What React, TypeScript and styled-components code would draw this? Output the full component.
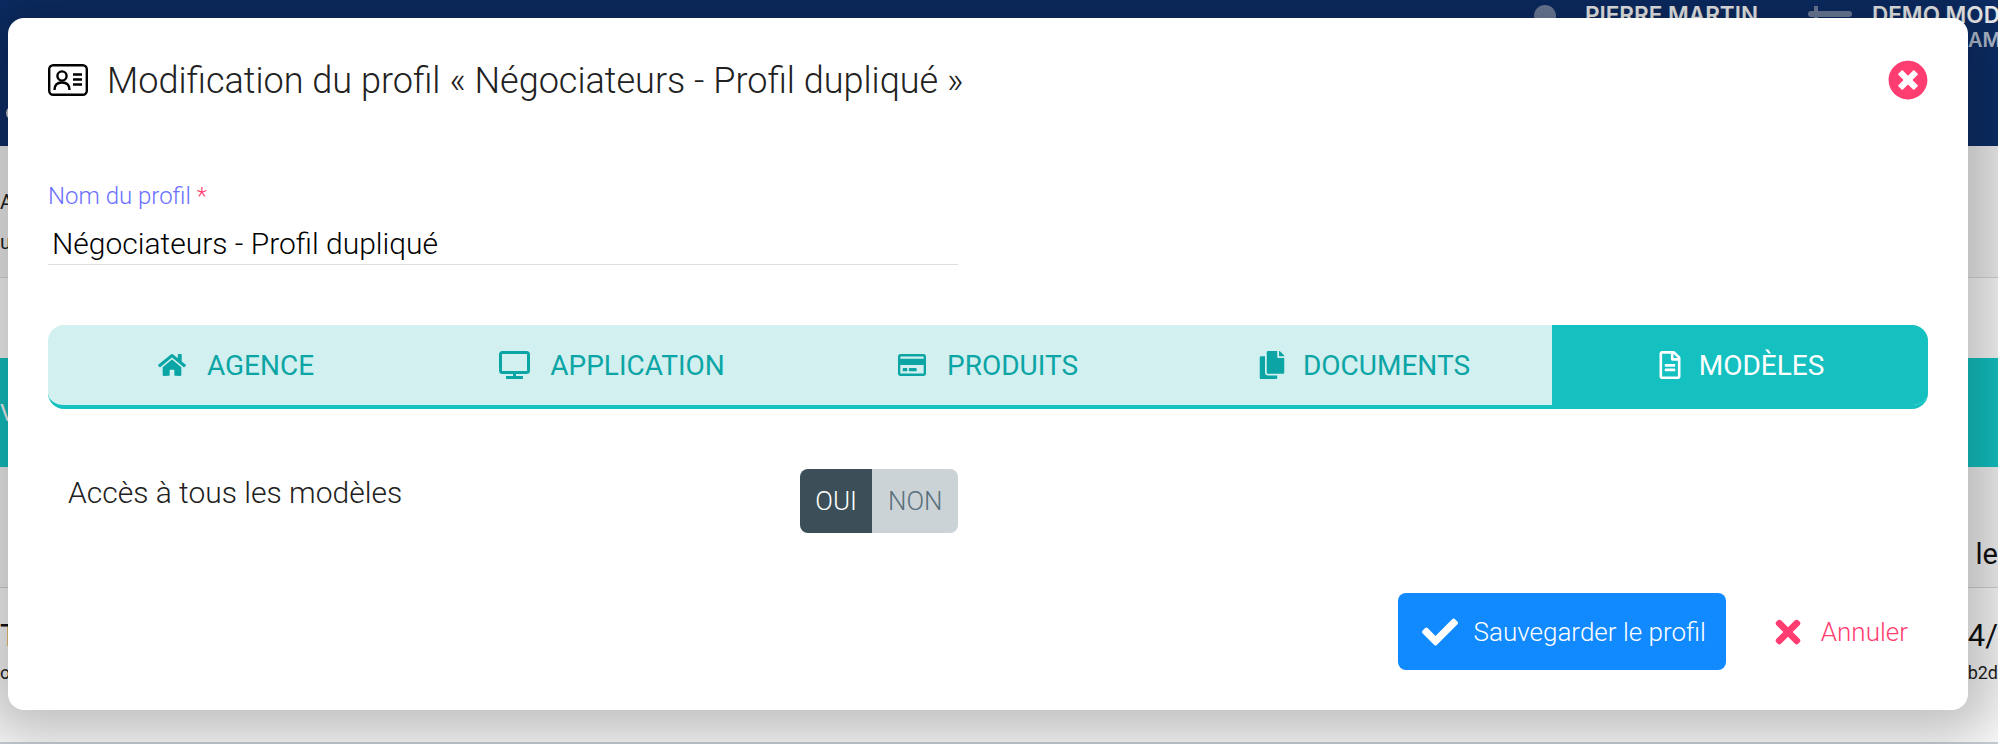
import React from 'react'
import styled, { createGlobalStyle } from 'styled-components'
import { FaHome, FaRegCreditCard, FaCopy, FaRegFileAlt, FaTimesCircle, FaCheck, FaTimes } from 'react-icons/fa'

const GlobalStyle = createGlobalStyle`
  html, body { margin: 0; padding: 0; height: 744px; overflow: hidden; background: #fff; }
  body { font-family: Roboto, "Liberation Sans", sans-serif; }
`

const Page = styled.div`
  position: relative;
  width: 1998px;
  height: 744px;
  overflow: hidden;
  background: #fff;
  display: flex;
  flex-direction: column;
`

const TopBar = styled.header`
  flex: none;
  height: 146px;
  background: #0d2f6b;
  display: flex;
  align-items: flex-start;
  color: #fff;
  font-family: Inter, sans-serif;
  overflow: hidden;
`

const LogoMark = styled.div`
  width: 14px;
  height: 14px;
  margin: 106px auto 0 6px;
  border-radius: 50%;
  background: #d5d5d5;
`

const Avatar = styled.div`
  flex: none;
  width: 22px;
  height: 22px;
  margin-top: 5px;
  border-radius: 50%;
  background: #7686a6;
`

const UserName = styled.div`
  flex: none;
  width: 223px;
  margin-left: 29px;
  padding-top: 1px;
  font-size: 22.5px;
  font-weight: 600;
  white-space: nowrap;
`

const Swap = styled.div`
  position: relative;
  flex: none;
  width: 44px;
  height: 6px;
  margin-top: 11px;
  border-radius: 3px;
  background: #7686a6;
  &::before {
    content: '';
    position: absolute;
    left: 6px;
    top: -5px;
    width: 4px;
    height: 16px;
    background: #7686a6;
  }
`

const Account = styled.div`
  flex: none;
  width: 126px;
  margin-left: 20px;
  padding-top: 1px;
  font-size: 22.5px;
  line-height: 27px;
  font-weight: 600;
  white-space: nowrap;
  overflow: hidden;
`

const AccountRole = styled.div`
  padding-top: 2px;
  padding-left: 96px;
  font-size: 20px;
  line-height: 20px;
  color: #b9c4d6;
`

const Intro = styled.div`
  flex: none;
  height: 132px;
  box-sizing: border-box;
  padding-top: 36px;
  border-bottom: 1px solid #dcdcdc;
  background: #f6f6f6;
  font-size: 20px;
  line-height: 40px;
  color: #222;
`

const Strip = styled.div`
  flex: none;
  height: 80px;
  background: #fff;
`

const Band = styled.div`
  flex: none;
  height: 109px;
  display: flex;
  align-items: center;
  background: #14c8c8;
  color: #fff;
  font-size: 24px;
`

const Heading = styled.div`
  flex: none;
  height: 121px;
  box-sizing: border-box;
  padding-top: 70px;
  border-bottom: 1px solid #d8d8d8;
  display: flex;
  justify-content: flex-end;
  font-size: 29px;
  font-weight: 400;
  line-height: 34px;
  color: #111;
  background: #f8f8f8;
`

const DataRow = styled.div`
  flex: 1;
  padding-top: 32px;
  display: flex;
  justify-content: space-between;
  border-bottom: 2px solid #ccd3d9;
`

const DataCell = styled.div<{ $right?: boolean }>`
  font-size: 31px;
  line-height: 32px;
  color: #111;
  text-align: ${p => (p.$right ? 'right' : 'left')};
  small {
    display: block;
    margin-top: 10px;
    font-size: 18px;
    line-height: 22px;
    color: #222;
  }
`

const Modal = styled.section`
  position: absolute;
  left: 8px;
  top: 18px;
  width: 1960px;
  height: 692px;
  box-sizing: border-box;
  padding: 40px;
  border-radius: 16px;
  background: #fff;
  box-shadow: 0 0 60px 30px rgba(0, 0, 0, 0.25);
  display: flex;
  flex-direction: column;
`

const ModalHeader = styled.div`
  display: flex;
  align-items: center;
  height: 44px;
`

const ModalTitle = styled.h1`
  margin: 2px 0 0;
  font-size: 36.05px;
  font-weight: 300;
  line-height: 46px;
  color: #212121;
`

const ProfileIcon = styled.svg`
  flex: none;
  width: 40px;
  height: 32px;
  margin-right: 19px;
`

const CloseIcon = styled(FaTimesCircle)`
  margin-left: auto;
  font-size: 40px;
  color: #ff3d71;
`

const FieldLabel = styled.label`
  margin-top: 80px;
  font-size: 24px;
  line-height: 28px;
  font-weight: 300;
  color: #6a70ff;
  span { color: #ff3d71; }
`

const NameInput = styled.div`
  width: 910px;
  box-sizing: border-box;
  margin-top: 10px;
  border-bottom: 1px solid #dedede;
  padding: 6px 4px 2px;
  font-size: 30px;
  line-height: 36px;
  font-weight: 300;
  color: #000;
`

const Tabs = styled.div`
  display: flex;
  margin-top: 60px;
  height: 80px;
  border-radius: 16px;
  border-bottom: 4px solid #14c0c0;
  background: #d2f0f0;
  overflow: hidden;
`

const Tab = styled.div<{ $active?: boolean; $gap: number }>`
  flex: 1;
  display: flex;
  align-items: center;
  justify-content: center;
  gap: ${p => p.$gap}px;
  font-size: 28px;
  font-weight: 400;
  text-transform: uppercase;
  color: ${p => (p.$active ? '#fff' : '#0ca5a5')};
  background: ${p => (p.$active ? '#14c0c0' : 'transparent')};
  svg { flex: none; font-size: 28px; }
`

const MonitorIcon = styled.svg`
  width: 31px;
  height: 28px;
`

const Row = styled.div`
  display: flex;
  justify-content: space-between;
  width: 910px;
  margin-top: 60px;
  padding-left: 20px;
  box-sizing: border-box;
`

const RowLabel = styled.div`
  padding-top: 6px;
  font-size: 30px;
  line-height: 36px;
  font-weight: 300;
  color: #212121;
`

const Toggle = styled.div`
  display: flex;
  height: 64px;
  border-radius: 8px;
  overflow: hidden;
`

const ToggleOption = styled.div<{ $on?: boolean }>`
  padding: 0 15.5px;
  display: flex;
  align-items: center;
  font-size: 26px;
  font-weight: 300;
  color: ${p => (p.$on ? '#fff' : '#5a6f7c')};
  background: ${p => (p.$on ? '#3c4f58' : '#cbd3d7')};
`

const Actions = styled.div`
  display: flex;
  justify-content: flex-end;
  align-items: center;
  gap: 44px;
  margin-top: auto;
  padding-right: 20px;
`

const SaveButton = styled.button`
  display: flex;
  align-items: center;
  gap: 16px;
  height: 77px;
  padding: 0 20px 0 24px;
  border: 0;
  border-radius: 8px;
  background: #1189ff;
  color: #fff;
  font: 300 26px Roboto, sans-serif;
  svg { font-size: 36px; }
`

const CancelButton = styled.div`
  display: flex;
  align-items: center;
  gap: 15px;
  font-size: 26px;
  font-weight: 300;
  color: #ff3d71;
  svg { font-size: 36px; }
`

const Monitor = () => (
  <MonitorIcon viewBox="0 0 31 28" fill="none" stroke="currentColor">
    <rect x="1.5" y="1.5" width="28" height="20" rx="2" strokeWidth="3" />
    <path d="M15.5 22v4M7 26.5h17" strokeWidth="3" />
  </MonitorIcon>
)

const tabs = [
  { label: 'Agence', icon: <FaHome />, gap: 21 },
  { label: 'Application', icon: <Monitor />, gap: 20 },
  { label: 'Produits', icon: <FaRegCreditCard />, gap: 21 },
  { label: 'Documents', icon: <FaCopy />, gap: 17 },
  { label: 'Modèles', icon: <FaRegFileAlt />, gap: 15, active: true },
]

const App = () => {
  return (
    <Page>
      <GlobalStyle />
      <TopBar>
        <LogoMark />
        <Avatar />
        <UserName>PIERRE MARTIN</UserName>
        <Swap />
        <Account>
          DEMO MODE
          <AccountRole>AMI</AccountRole>
        </Account>
      </TopBar>
      <Intro>
        A<br />u
      </Intro>
      <Strip />
      <Band>V</Band>
      <Heading>de le</Heading>
      <DataRow>
        <DataCell>T<small>o</small></DataCell>
        <DataCell $right>04/<small>b2d</small></DataCell>
      </DataRow>
      <Modal>
        <ModalHeader>
          <ProfileIcon viewBox="0 0 40 32" fill="none" stroke="currentColor" strokeWidth="2.4">
            <rect x="1.2" y="1.2" width="37.6" height="29.6" rx="4" />
            <circle cx="14" cy="12" r="4.6" />
            <path d="M6.5 26c0-5 3-7.5 7.5-7.5s7.5 2.500 7.500 7.500M25 10.500h9M25 15.500h9M25 20.500h9" />
          </ProfileIcon>
          <ModalTitle>Modification du profil « Négociateurs - Profil dupliqué »</ModalTitle>
          <CloseIcon />
        </ModalHeader>
        <FieldLabel>Nom du profil <span>*</span></FieldLabel>
        <NameInput>Négociateurs - Profil dupliqué</NameInput>
        <Tabs>
          {tabs.map(t => (
            <Tab key={t.label} $active={t.active} $gap={t.gap}>{t.icon}{t.label}</Tab>
          ))}
        </Tabs>
        <Row>
          <RowLabel>Accès à tous les modèles</RowLabel>
          <Toggle>
            <ToggleOption $on>OUI</ToggleOption>
            <ToggleOption>NON</ToggleOption>
          </Toggle>
        </Row>
        <Actions>
          <SaveButton><FaCheck />Sauvegarder le profil</SaveButton>
          <CancelButton><FaTimes />Annuler</CancelButton>
        </Actions>
      </Modal>
    </Page>
  )
}

export default App
